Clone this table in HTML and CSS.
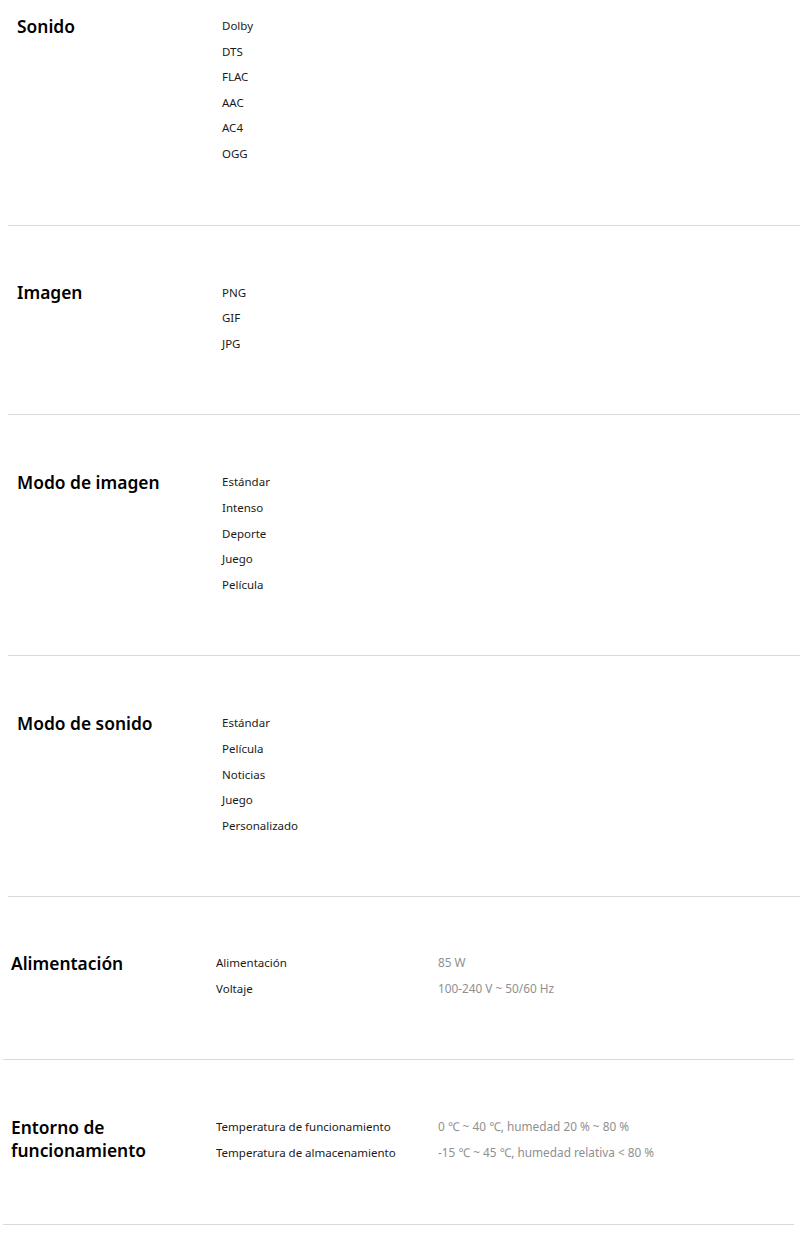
FILE: index.html
```html
<!DOCTYPE html>
<html lang="es">

<head>
    <meta charset="utf-8">
    <link rel="stylesheet" href="styles.css">
</head>

<body>

    <div id="spec-list">
        <div class="spec-section first-section">
            <div class="spec-title">Sonido</div>
            <ul class="spec-items">
                <li>Dolby</li>
                <li>DTS</li>
                <li>FLAC</li>
                <li>AAC</li>
                <li>AC4</li>
                <li>OGG</li>
            </ul>
        </div>
        <div class="spec-section">
            <div class="spec-title">Imagen</div>
            <ul class="spec-items">
                <li>PNG</li>
                <li>GIF</li>
                <li>JPG</li>
            </ul>
        </div>
        <div class="spec-section">
            <div class="spec-title">Modo de imagen</div>
            <ul class="spec-items">
                <li>Estándar</li>
                <li>Intenso</li>
                <li>Deporte</li>
                <li>Juego</li>
                <li>Película</li>
            </ul>
        </div>
        <div class="spec-section">
            <div class="spec-title">Modo de sonido</div>
            <ul class="spec-items">
                <li>Estándar</li>
                <li>Película</li>
                <li>Noticias</li>
                <li>Juego</li>
                <li>Personalizado</li>
            </ul>
        </div>
    </div>

    <div id="table-list">
        <div class="spec-section power-section">
            <div class="spec-title">Alimentación</div>
            <div class="spec-table">
                <div class="spec-label">Alimentación</div>
                <div class="spec-value">85 W</div>
                <div class="spec-label">Voltaje</div>
                <div class="spec-value">100-240 V ~ 50/60 Hz</div>
            </div>
        </div>
        <div class="spec-section">
            <div class="spec-title">Entorno de funcionamiento</div>
            <div class="spec-table">
                <div class="spec-label">Temperatura de funcionamiento</div>
                <div class="spec-value">0 ℃ ~ 40 ℃, humedad 20 % ~ 80 %</div>
                <div class="spec-label">Temperatura de almacenamiento</div>
                <div class="spec-value">-15 ℃ ~ 45 ℃, humedad relativa &lt; 80 %</div>
            </div>
        </div>
    </div>

</body>

</html>
```

FILE: styles.css
```css
body {
    margin: 0;
    background-color: #fff;
    color: #1a1a1a;
    font-family: "Noto Sans", "Open Sans", sans-serif;
}

#spec-list {
    margin-left: 8px;
}

#table-list {
    margin-left: 3px;
    margin-right: 6px;
}

.spec-section {
    display: flex;
    align-items: flex-start;
    padding: 54px 0 58px 9px;
    border-bottom: 1px solid #dadada;
}

#table-list .spec-section {
    padding-left: 8px;
}

.first-section {
    padding-top: 13px;
}

.power-section {
    padding-top: 53px !important;
}

.spec-title {
    width: 205px;
    flex-shrink: 0;
    padding-top: 1.5px;
    padding-right: 20px;
    box-sizing: border-box;
    font-size: 17.4px;
    line-height: 23px;
    font-weight: 600;
    color: #000;
}

#table-list .spec-title {
    width: 205px;
}

.spec-items {
    margin: 0;
    padding: 0;
    list-style: none;
    font-size: 11.5px;
    line-height: 25.6px;
}

.spec-table {
    display: grid;
    grid-template-columns: 222px auto;
    font-size: 11.5px;
    line-height: 25.6px;
}

.spec-value {
    font-size: 11.8px;
    color: #8f8f8f;
}
```
